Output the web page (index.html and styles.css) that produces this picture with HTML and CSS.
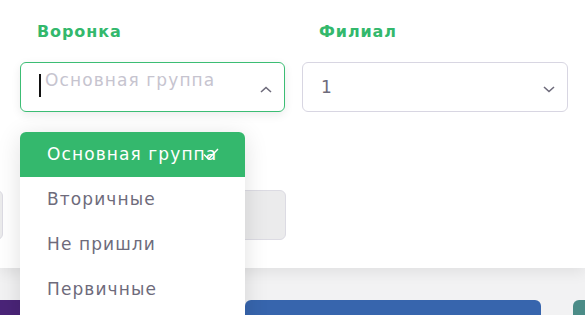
FILE: index.html
```html
<!DOCTYPE html>
<html lang="ru">
<head>
    <meta charset="UTF-8">
    <title>Фильтры</title>
    <link rel="stylesheet" href="styles.css">
</head>
<body>
<div class="card">
    <div class="row">
        <div class="field">
            <div class="label">Воронка</div>
            <div class="select focused">
                <span class="caret"></span>
                <span class="placeholder">Основная группа</span>
                <svg class="chev" width="12" height="7" viewBox="0 0 12 7"><path d="M1 6 L6 1.5 L11 6" fill="none" stroke="#6e6b7b" stroke-width="1.6"/></svg>
            </div>
            <ul class="menu">
                <li class="active">Основная группа
                    <svg class="check" width="16" height="13" viewBox="0 0 16 13"><path d="M1 6.5 L5.5 11 L15 1" fill="none" stroke="#fff" stroke-width="1.4"/></svg>
                </li>
                <li>Вторичные</li>
                <li>Не пришли</li>
                <li>Первичные</li>
            </ul>
        </div>
        <div class="field">
            <div class="label">Филиал</div>
            <div class="select">
                <span class="value">1</span>
                <svg class="chev" width="12" height="7" viewBox="0 0 12 7"><path d="M1 1 L6 5.5 L11 1" fill="none" stroke="#6e6b7b" stroke-width="1.6"/></svg>
            </div>
        </div>
    </div>
    <div class="row2">
        <div class="box"></div>
        <div class="box"></div>
    </div>
</div>
<div class="tiles">
    <div class="tile purple"></div>
    <div class="tile blue"></div>
    <div class="tile teal"></div>
</div>
</body>
</html>
```

FILE: styles.css
```css
html, body{
    overflow:hidden;
}
body{
    margin:0;
    height:315px;
    background:#f2f2f3;
    font-family:"DejaVu Sans","Noto Sans",sans-serif;
}
.card{
    background:#fff;
    padding:18px 0 28px 20px;
    box-shadow:0 4px 14px rgba(0,0,0,0.08);
}
.row{
    display:grid;
    grid-template-columns:265px 266px;
    column-gap:17px;
}
.field{
    position:relative;
}
.label{
    color:#33b86c;
    font-weight:bold;
    font-size:16px;
    letter-spacing:0.9px;
    padding-left:17px;
    height:26px;
    line-height:26px;
    margin-top:1px;
    margin-bottom:17px;
}
.select{
    position:relative;
    box-sizing:border-box;
    height:50px;
    border:1px solid #d8d6e2;
    border-radius:6px;
    display:flex;
    align-items:center;
    padding:0 18px;
    font-size:17px;
    letter-spacing:1.1px;
}
.select.focused{
    border-color:#3cbd74;
    box-shadow:0 3px 10px rgba(0,0,0,0.08);
    align-items:flex-start;
    padding-top:5px;
}
.caret{
    width:2px;
    height:23px;
    background:#111;
    margin-top:6px;
    margin-right:4px;
}
.placeholder{
    color:#c6c4cf;
    margin-top:2px;
}
.value{
    color:#6e6b7b;
    flex:1;
}
.chev{
    position:absolute;
    right:12px;
    top:23px;
}
.menu{
    position:absolute;
    left:0;
    top:114px;
    width:225px;
    margin:0;
    padding:0 0 20px;
    list-style:none;
    background:#fff;
    border-radius:6px 6px 0 0;
    box-shadow:0 4px 24px rgba(0,0,0,0.12);
    z-index:5;
}
.menu li{
    position:relative;
    height:45px;
    line-height:45px;
    padding-left:27px;
    font-size:17px;
    letter-spacing:1.1px;
    color:#6e6b7b;
    white-space:nowrap;
}
.menu li.active{
    background:#34b86d;
    color:#fff;
    border-radius:6px 6px 0 0;
}
.check{
    position:absolute;
    left:183px;
    top:16px;
}
.row2{
    display:grid;
    grid-template-columns:266px 266px;
    column-gap:17px;
    margin-left:-283px;
    margin-top:78px;
}
.box{
    box-sizing:border-box;
    height:50px;
    background:#ebebec;
    border:1px solid #dcdbe3;
    border-radius:6px;
}
.tiles{
    display:flex;
    gap:32px;
    margin-top:32px;
}
.tile{
    flex:none;
    width:296px;
    height:15px;
    border-radius:6px 6px 0 0;
}
.purple{
    background:#4a2478;
    width:213px;
    border-radius:0 6px 0 0;
}
.blue{ background:#3765ad; }
.teal{ background:#4b8c87; }
```
